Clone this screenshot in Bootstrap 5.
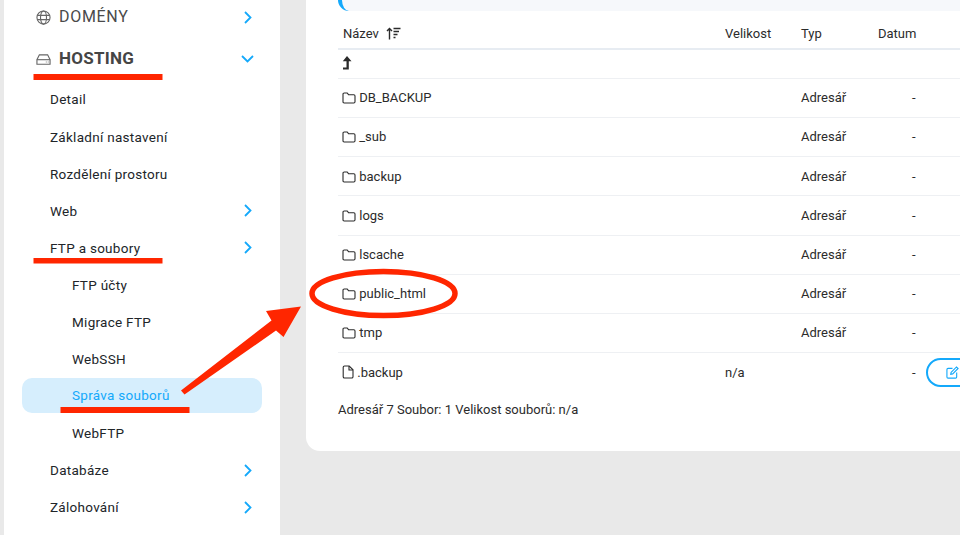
<!DOCTYPE html>
<html lang="cs">
<head>
<meta charset="utf-8">
<title>Správa souborů</title>
<link href="https://cdn.jsdelivr.net/npm/bootstrap@5.3.0/dist/css/bootstrap.min.css" rel="stylesheet">
<style>
html,body{height:535px;overflow:hidden}
body{background:#e9e9e9;font-family:Roboto,"Liberation Sans",sans-serif;color:#212529;font-size:13.5px;position:relative}
.shell{height:535px;padding-left:4px}
.side{width:276px;flex:none;background:#fff;height:535px;padding:0 18px 0 18px}
.top-item{color:#4a4a4a;font-size:16px;letter-spacing:.7px;padding-left:14px;padding-right:10px}
.top-a{height:34px}
.top-b{height:44px;font-weight:700;font-size:17px;letter-spacing:.25px;margin-top:3px;color:#454545}
.top-item svg.ico{margin-right:8px;color:#666}
.top-b .chev{margin-right:-2px}
.sub-item{height:37.1px;color:#212529;padding-left:28px;padding-right:10px;letter-spacing:.28px;border-radius:10px}
.sub-two{padding-left:50px}
.sub-on{background:#d6eefd;color:#14a9fb;height:35px;margin-bottom:2.1px}
.chev{color:#14a9fb;margin-left:auto}
.pane{margin-left:26px;flex:1;min-width:0;background:#fff;height:451px;border-bottom-left-radius:14px;padding-left:32px;overflow:hidden}
.note{height:11px;background:#f6f8fb;border-left:4px solid #14a9fb;border-bottom-left-radius:12px}
.files{table-layout:fixed;width:680px;margin:0;font-size:13px}
.files th,.files td{padding:0 5px;vertical-align:middle;border-bottom:1px solid #eef0f3;font-weight:400;color:#2b2b2b;white-space:nowrap}
.files thead th{height:38.3px;padding-top:9px;border-bottom:2px solid #e7ecf2}
.files tr.up td{height:29px}
.files tr.row-f td{height:39.2px}
.files tr.last td{border-bottom:0}
.files svg{vertical-align:-2px}
.files td>svg:first-child{margin-left:-1px}
.dash{padding-left:39px!important}
.edit-btn{display:inline-flex;align-items:center;width:70px;height:29px;border:2px solid #14a9fb;border-radius:15px;padding-left:18px;color:#14a9fb;background:#fff}
.summary{margin:8px 0 0;font-size:13px;color:#2b2b2b;line-height:20px}
.marks{position:absolute;left:0;top:0;width:960px;height:535px;pointer-events:none}
</style>
</head>
<body>
<div class="shell d-flex">
  <nav class="side">
    <div class="top-item top-a d-flex align-items-center">
      <svg class="ico" width="15" height="15" viewBox="0 0 16 16" fill="none" stroke="currentColor" stroke-width="1.2"><circle cx="8" cy="8" r="7"/><ellipse cx="8" cy="8" rx="3.2" ry="7"/><path d="M1.3 5.7h13.4M1.3 10.3h13.4"/></svg>
      <span>DOMÉNY</span>
      <svg class="chev" width="8" height="13" viewBox="0 0 8 13" fill="none" stroke="currentColor" stroke-width="1.8"><path d="M1 1l5.5 5.5L1 12"/></svg>
    </div>
    <div class="top-item top-b d-flex align-items-center">
      <svg class="ico" width="15" height="15" viewBox="0 0 16 16" fill="none" stroke="currentColor" stroke-width="1.2"><path d="M3.6 3h8.8L15 8.2V13H1V8.2z"/><path d="M1 8.2h14"/><path d="M10.5 10.7h.8M12.6 10.7h.8"/></svg>
      <span>HOSTING</span>
      <svg class="chev" width="13" height="8" viewBox="0 0 13 8" fill="none" stroke="currentColor" stroke-width="1.8"><path d="M1 1l5.5 5.5L12 1"/></svg>
    </div>
    <div class="sub-item d-flex align-items-center">Detail</div>
    <div class="sub-item d-flex align-items-center">Základní nastavení</div>
    <div class="sub-item d-flex align-items-center">Rozdělení prostoru</div>
    <div class="sub-item d-flex align-items-center">Web<svg class="chev" width="8" height="13" viewBox="0 0 8 13" fill="none" stroke="currentColor" stroke-width="1.8"><path d="M1 1l5.5 5.5L1 12"/></svg></div>
    <div class="sub-item d-flex align-items-center">FTP a soubory<svg class="chev" width="8" height="13" viewBox="0 0 8 13" fill="none" stroke="currentColor" stroke-width="1.8"><path d="M1 1l5.5 5.5L1 12"/></svg></div>
    <div class="sub-item sub-two d-flex align-items-center">FTP účty</div>
    <div class="sub-item sub-two d-flex align-items-center">Migrace FTP</div>
    <div class="sub-item sub-two d-flex align-items-center">WebSSH</div>
    <div class="sub-item sub-two sub-on d-flex align-items-center">Správa souborů</div>
    <div class="sub-item sub-two d-flex align-items-center">WebFTP</div>
    <div class="sub-item d-flex align-items-center">Databáze<svg class="chev" width="8" height="13" viewBox="0 0 8 13" fill="none" stroke="currentColor" stroke-width="1.8"><path d="M1 1l5.5 5.5L1 12"/></svg></div>
    <div class="sub-item d-flex align-items-center">Zálohování<svg class="chev" width="8" height="13" viewBox="0 0 8 13" fill="none" stroke="currentColor" stroke-width="1.8"><path d="M1 1l5.5 5.5L1 12"/></svg></div>
  </nav>
  <main class="pane">
    <div class="note"></div>
    <table class="table files">
      <colgroup><col style="width:382px"><col style="width:76px"><col style="width:77px"><col style="width:48px"><col></colgroup>
      <thead><tr>
        <th>Název <svg class="ms-1" width="15" height="13" viewBox="0 0 15 13" fill="none" stroke="currentColor" stroke-width="1.4"><path d="M3.5 12.5V1.5M1 4l2.5-2.6L6 4"/><path d="M7.5 1.5h7M7.5 4.5h5.5M7.5 7.5h4M7.5 10.5h2"/></svg></th>
        <th>Velikost</th><th>Typ</th><th>Datum</th><th></th>
      </tr></thead>
      <tbody>
        <tr class="up"><td><svg width="10" height="14" viewBox="0 0 10 14" fill="currentColor"><path d="M5 0L9.5 5.2H6.8V13.5H1V11.6H4.5V5.2H.8z"/></svg></td><td></td><td></td><td></td><td></td></tr>
        <tr class="row-f"><td><svg width="14" height="12" viewBox="0 0 14 12" fill="none" stroke="currentColor" stroke-width="1.1"><path d="M1 2.2Q1 1 2.2 1h3l1.3 1.7h5.3q1.2 0 1.2 1.2v5.9q0 1.2-1.2 1.2H2.2Q1 11 1 9.8z"/></svg> DB_BACKUP</td><td></td><td>Adresář</td><td class="dash">-</td><td></td></tr>
        <tr class="row-f"><td><svg width="14" height="12" viewBox="0 0 14 12" fill="none" stroke="currentColor" stroke-width="1.1"><path d="M1 2.2Q1 1 2.2 1h3l1.3 1.7h5.3q1.2 0 1.2 1.2v5.9q0 1.2-1.2 1.2H2.2Q1 11 1 9.8z"/></svg> _sub</td><td></td><td>Adresář</td><td class="dash">-</td><td></td></tr>
        <tr class="row-f"><td><svg width="14" height="12" viewBox="0 0 14 12" fill="none" stroke="currentColor" stroke-width="1.1"><path d="M1 2.2Q1 1 2.2 1h3l1.3 1.7h5.3q1.2 0 1.2 1.2v5.9q0 1.2-1.2 1.2H2.2Q1 11 1 9.8z"/></svg> backup</td><td></td><td>Adresář</td><td class="dash">-</td><td></td></tr>
        <tr class="row-f"><td><svg width="14" height="12" viewBox="0 0 14 12" fill="none" stroke="currentColor" stroke-width="1.1"><path d="M1 2.2Q1 1 2.2 1h3l1.3 1.7h5.3q1.2 0 1.2 1.2v5.9q0 1.2-1.2 1.2H2.2Q1 11 1 9.8z"/></svg> logs</td><td></td><td>Adresář</td><td class="dash">-</td><td></td></tr>
        <tr class="row-f"><td><svg width="14" height="12" viewBox="0 0 14 12" fill="none" stroke="currentColor" stroke-width="1.1"><path d="M1 2.2Q1 1 2.2 1h3l1.3 1.7h5.3q1.2 0 1.2 1.2v5.9q0 1.2-1.2 1.2H2.2Q1 11 1 9.8z"/></svg> lscache</td><td></td><td>Adresář</td><td class="dash">-</td><td></td></tr>
        <tr class="row-f"><td><svg width="14" height="12" viewBox="0 0 14 12" fill="none" stroke="currentColor" stroke-width="1.1"><path d="M1 2.2Q1 1 2.2 1h3l1.3 1.7h5.3q1.2 0 1.2 1.2v5.9q0 1.2-1.2 1.2H2.2Q1 11 1 9.8z"/></svg> public_html</td><td></td><td>Adresář</td><td class="dash">-</td><td></td></tr>
        <tr class="row-f"><td><svg width="14" height="12" viewBox="0 0 14 12" fill="none" stroke="currentColor" stroke-width="1.1"><path d="M1 2.2Q1 1 2.2 1h3l1.3 1.7h5.3q1.2 0 1.2 1.2v5.9q0 1.2-1.2 1.2H2.2Q1 11 1 9.8z"/></svg> tmp</td><td></td><td>Adresář</td><td class="dash">-</td><td></td></tr>
        <tr class="row-f last"><td><svg width="12" height="14" viewBox="0 0 12 14" fill="none" stroke="currentColor" stroke-width="1.1"><path d="M2.5 1h4.7L11 4.8v6.9q0 1.3-1.3 1.3H2.5q-1.3 0-1.3-1.3V2.3Q1.2 1 2.5 1z"/><path d="M7 1v4h4"/></svg> .backup</td><td>n/a</td><td></td><td class="dash">-</td><td><span class="edit-btn"><svg width="13" height="13" viewBox="0 0 14 14" fill="none" stroke="currentColor" stroke-width="1.2"><path d="M7 2.5H2.2Q1 2.5 1 3.7v8.1Q1 13 2.2 13h8.1q1.2 0 1.2-1.2V7"/><path d="M5.5 6.8L11.3 1l1.7 1.7L7.2 8.5l-2.1.4z"/></svg></span></td></tr>
      </tbody>
    </table>
    <p class="summary">Adresář 7 Soubor: 1 Velikost souborů: n/a</p>
  </main>
</div>
<svg class="marks" viewBox="0 0 960 535" fill="#ff2600">
  <rect x="33.5" y="74" width="129" height="6"/>
  <rect x="33.5" y="258" width="129" height="5.5"/>
  <rect x="60.5" y="407" width="129" height="6"/>
  <ellipse cx="383.5" cy="293.5" rx="71.5" ry="22" fill="none" stroke="#ff2600" stroke-width="5.5"/>
  <path d="M181 390.5L184.5 394.5 276 330.5 283.5 337 301 306.5 266 311 271.5 320.5z"/>
</svg>
</body>
</html>
